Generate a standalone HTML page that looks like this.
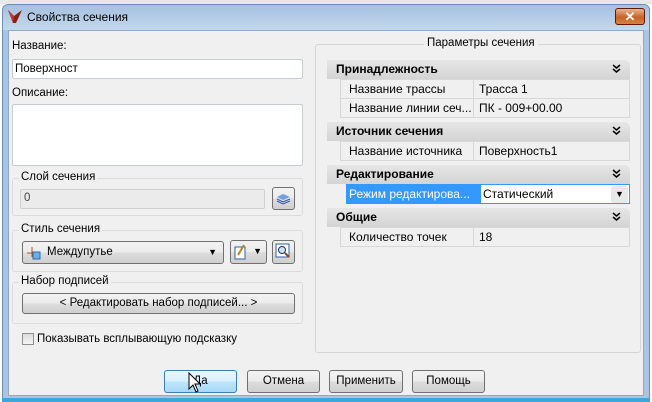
<!DOCTYPE html>
<html><head><meta charset="utf-8"><style>
*{box-sizing:border-box;margin:0;padding:0}
body{width:652px;height:402px;overflow:hidden;background:#fff;font-family:"Liberation Sans",sans-serif;font-size:11.5px;color:#000;position:relative}
.a{position:absolute}
.win{left:2px;top:4px;width:648px;height:398px;border:1px solid #6d8fb3;border-radius:6px 6px 0 0;background:#a9c5e2}
.title{left:3px;top:5px;width:646px;height:25px;background:linear-gradient(#a5c0de,#c3d8ee);border-radius:5px 5px 0 0}
.content{left:8px;top:30px;width:636px;height:366px;background:#f0f0f0;border:1px solid #8fa9c6}
.inp{background:#fff;border:1px solid #c6cbd1;border-radius:2px}
.grp{border:1px solid #dcdcdc;border-radius:3px}
.lbl{background:#f0f0f0;padding:0 2px}
.btn{border:1px solid #707070;border-radius:3px;background:linear-gradient(#f2f2f2 0,#ebebeb 50%,#dddddd 51%,#cfcfcf 100%);text-align:center;line-height:20px}
.cat{left:327px;width:303px;height:19px;background:linear-gradient(#e6e6e6,#d4d4d4);font-weight:bold;font-size:12px;padding-left:9px;line-height:19px;border-radius:0 6px 0 0}
.row{left:340px;width:290px;height:20px;border:1px solid #d8d8d8;background:#f0f0f0;line-height:18px;font-size:12px}
.row span{position:absolute;top:0;height:18px}
.chev{position:absolute;right:9px;top:4px}
</style></head><body>
<div class="a" style="left:0;top:0;width:652px;height:4px;background:#e8e8e8"></div>
<div class="a win"></div>
<div class="a title"></div>
<svg class="a" style="left:7px;top:8px" width="16" height="16"><path d="M1 2 L7 8 L15 2 L9 15 L6 15 Z" fill="#8a1e14"/><path d="M1 2 L7 8 L6 15 Z" fill="#c0392b"/></svg>
<div class="a" style="left:27px;top:10px;font-size:12px">Свойства сечения</div>
<div class="a" style="left:615px;top:8px;width:30px;height:17px;border:1px solid #5a1a10;border-radius:3px;background:linear-gradient(#e9b48a,#c8622a 55%,#d9833f);color:#fff;text-align:center;font-weight:bold;font-size:13px;line-height:15px">✕</div>
<div class="a content"></div>

<div class="a" style="left:12px;top:40px">Название:</div>
<div class="a inp" style="left:12px;top:59px;width:291px;height:20px;padding:3px 2px">Поверхност</div>
<div class="a" style="left:12px;top:87px">Описание:</div>
<div class="a inp" style="left:12px;top:104px;width:291px;height:62px"></div>

<div class="a grp" style="left:12px;top:178px;width:291px;height:38px"></div>
<div class="a lbl" style="left:19px;top:171px">Слой сечения</div>
<div class="a" style="left:20px;top:189px;width:245px;height:20px;background:#ebebeb;border:1px solid #d0d0d0;border-radius:2px;padding:2px 3px;color:#444">0</div>
<div class="a btn" style="left:272px;top:187px;width:23px;height:23px"></div>
<svg class="a" style="left:276px;top:192px" width="15" height="13"><path d="M1 5 L7 2 L14 5 L7 8Z" fill="#6fa0e0"/><path d="M1 7 L7 10 L14 7 M1 9 L7 12 L14 9" stroke="#3456b0" fill="none"/></svg>

<div class="a grp" style="left:12px;top:230px;width:291px;height:42px"></div>
<div class="a lbl" style="left:19px;top:223px">Стиль сечения</div>
<div class="a btn" style="left:22px;top:241px;width:202px;height:23px;text-align:left;padding-left:24px;line-height:21px">Междупутье<span style="position:absolute;right:6px;top:0;font-size:9px">▼</span></div>
<svg class="a" style="left:26px;top:244px" width="16" height="16"><path d="M1 9 H14 M6 3 V13" stroke="#b05020"/><rect x="7" y="8" width="7" height="7" fill="#6ab0e8" stroke="#2a6ab0"/></svg>
<div class="a btn" style="left:230px;top:240px;width:37px;height:24px;text-align:right;padding-right:4px;font-size:9px">▼</div>
<svg class="a" style="left:234px;top:243px" width="14" height="17"><rect x="1" y="4" width="10" height="12" fill="#fff" stroke="#3060a0"/><path d="M4 12 L10 2" stroke="#c08020" stroke-width="2"/></svg>
<div class="a btn" style="left:272px;top:240px;width:23px;height:24px"></div>
<svg class="a" style="left:275px;top:243px" width="17" height="17"><rect x="1" y="1" width="13" height="13" fill="#fff" stroke="#3060a0"/><circle cx="7" cy="7" r="3.5" fill="#cfe3f5" stroke="#203060"/><path d="M10 10 L14 14" stroke="#a04010" stroke-width="2"/></svg>

<div class="a grp" style="left:12px;top:282px;width:291px;height:42px"></div>
<div class="a lbl" style="left:19px;top:275px">Набор подписей</div>
<div class="a btn" style="left:22px;top:293px;width:273px;height:21px;line-height:19px">&lt; Редактировать набор подписей... &gt;</div>

<div class="a" style="left:22px;top:333px;width:12px;height:12px;border:1px solid #8e8f8f;background:linear-gradient(#dcdcdc,#f6f6f6)"></div>
<div class="a" style="left:37px;top:333px">Показывать всплывающую подсказку</div>

<div class="a grp" style="left:315px;top:44px;width:326px;height:309px;border-color:#d5d5d5"></div>
<div class="a lbl" style="left:424px;top:37px;padding:0 3px">Параметры сечения</div>

<div class="a cat" style="top:60px">Принадлежность<svg class="chev" width="9" height="10"><path d="M1 1 L4.5 4 L8 1 M1 5 L4.5 8 L8 5" stroke="#000" stroke-width="1.5" fill="none"/></svg></div>
<div class="a row" style="top:79px"><span style="left:8px">Название трассы</span><span style="left:132px;border-left:1px solid #d8d8d8;padding-left:5px">Трасса 1</span></div>
<div class="a row" style="top:98px"><span style="left:8px">Название линии сеч...</span><span style="left:132px;border-left:1px solid #d8d8d8;padding-left:5px">ПК - 009+00.00</span></div>
<div class="a cat" style="top:122px">Источник сечения<svg class="chev" width="9" height="10"><path d="M1 1 L4.5 4 L8 1 M1 5 L4.5 8 L8 5" stroke="#000" stroke-width="1.5" fill="none"/></svg></div>
<div class="a row" style="top:141px"><span style="left:8px">Название источника</span><span style="left:132px;border-left:1px solid #d8d8d8;padding-left:5px">Поверхность1</span></div>
<div class="a cat" style="top:165px">Редактирование<svg class="chev" width="9" height="10"><path d="M1 1 L4.5 4 L8 1 M1 5 L4.5 8 L8 5" stroke="#000" stroke-width="1.5" fill="none"/></svg></div>
<div class="a" style="left:346px;top:184px;width:284px;height:20px;background:#3399ff;color:#fff;line-height:20px;padding-left:3px;font-size:12px">Режим редактирова...</div>
<div class="a" style="left:480px;top:184px;width:150px;height:20px;background:#fff;border:1px solid #3399ff;line-height:18px;padding-left:2px;font-size:12px">Статический</div>
<div class="a btn" style="left:611px;top:186px;width:17px;height:17px;border:none;background:#e8e8e8;font-size:9px;line-height:17px">▼</div>
<div class="a cat" style="top:208px">Общие<svg class="chev" width="9" height="10"><path d="M1 1 L4.5 4 L8 1 M1 5 L4.5 8 L8 5" stroke="#000" stroke-width="1.5" fill="none"/></svg></div>
<div class="a row" style="top:227px"><span style="left:8px">Количество точек</span><span style="left:132px;border-left:1px solid #d8d8d8;padding-left:5px">18</span></div>

<div class="a btn" style="left:164px;top:370px;width:73px;height:23px;border-color:#3c7fb1;background:linear-gradient(#eaf6fd,#d9f0fc 50%,#bee6fd 51%,#a7d9f5)">Да</div>
<div class="a btn" style="left:247px;top:370px;width:73px;height:23px">Отмена</div>
<div class="a btn" style="left:329px;top:370px;width:74px;height:23px">Применить</div>
<div class="a btn" style="left:412px;top:370px;width:73px;height:23px">Помощь</div>
<svg class="a" style="left:188px;top:372px" width="14" height="22"><path d="M1 1 L1 17 L5 13 L8 20 L10 19 L7 12 L12 12 Z" fill="#fff" stroke="#000"/></svg>
<div class="a" style="left:2px;top:398px;width:648px;height:4px;background:#3fa6d8"></div>
</body></html>
